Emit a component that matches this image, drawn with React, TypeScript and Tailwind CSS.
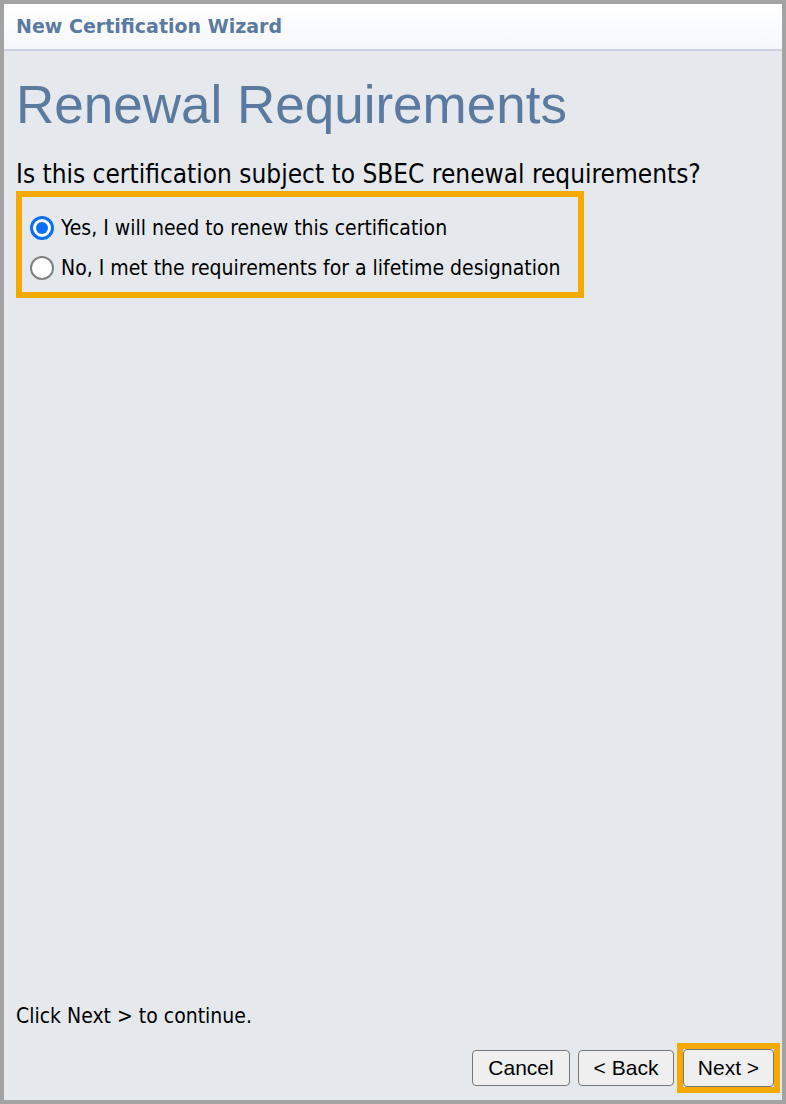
import { useState } from "react";

type Choice = "renew" | "lifetime";

const options: { value: Choice; label: string }[] = [
  { value: "renew", label: "Yes, I will need to renew this certification" },
  { value: "lifetime", label: "No, I met the requirements for a lifetime designation" },
];

function Radio({ checked }: { checked: boolean }) {
  return checked ? (
    <span className="flex h-[24px] w-[24px] shrink-0 items-center justify-center rounded-full border-[3px] border-[#0b6ef7] bg-white">
      <span className="h-[12px] w-[12px] rounded-full bg-[#0b6ef7]" />
    </span>
  ) : (
    <span className="h-[24px] w-[24px] shrink-0 rounded-full border-[2px] border-[#808080] bg-white" />
  );
}

export default function App() {
  const [choice, setChoice] = useState<Choice>("renew");

  return (
    <div className="flex h-[1104px] w-[786px] flex-col border-[4px] border-[#a3a3a3] bg-[#e5e9ee]">
      <header className="flex h-[47px] items-center border-b-[2px] border-[#c9d1e2] bg-gradient-to-b from-white to-[#f5f7fa] px-[12px]">
        <h1 className="font-['DejaVu_Sans',Verdana,sans-serif] text-[19px] font-bold text-[#5a7aa0]">
          New Certification Wizard
        </h1>
      </header>

      <main className="flex flex-1 flex-col pr-[2px] pl-[12px]">
        <h2 className="mt-[23px] font-['Liberation_Sans',Arial,sans-serif] text-[53px] leading-[62px] text-[#5b7a9f]">
          Renewal Requirements
        </h2>
        <p className="mt-[23px] font-['DejaVu_Sans_Condensed',Tahoma,sans-serif] text-[26px] leading-[30px] text-black">
          Is this certification subject to SBEC renewal requirements?
        </p>
        <div className="mt-[2px] flex w-[568px] flex-col gap-[16px] border-[6px] border-[#f6aa00] pt-[19px] pb-[12px] pl-[8px]">
          {options.map((o) => (
            <label
              key={o.value}
              className="flex cursor-pointer items-center gap-[7px] font-['DejaVu_Sans_Condensed',Tahoma,sans-serif] text-[21px] leading-[24px] text-black"
              onClick={() => setChoice(o.value)}
            >
              <Radio checked={choice === o.value} />
              {o.label}
            </label>
          ))}
        </div>

        <div className="flex-1" />

        <p className="font-['DejaVu_Sans_Condensed',Tahoma,sans-serif] text-[21px] leading-[24px] text-black">
          Click Next &gt; to continue.
        </p>

        <div className="mt-[15px] mb-[7px] flex items-center justify-end">
          <button
            type="button"
            className="h-[36px] w-[98px] rounded-[4px] border border-[#767676] bg-[#efefef] font-['Liberation_Sans',Arial,sans-serif] text-[21px] text-black"
          >
            Cancel
          </button>
          <button
            type="button"
            className="ml-[8px] h-[36px] w-[96px] rounded-[4px] border border-[#767676] bg-[#efefef] font-['Liberation_Sans',Arial,sans-serif] text-[21px] text-black"
          >
            &lt; Back
          </button>
          <div className="ml-[3px] border-[6px] border-[#f6aa00]">
            <button
              type="button"
              className="block h-[38px] w-[91px] rounded-[4px] border border-[#767676] bg-[#efefef] font-['Liberation_Sans',Arial,sans-serif] text-[21px] text-black"
            >
              Next &gt;
            </button>
          </div>
        </div>
      </main>
    </div>
  );
}
